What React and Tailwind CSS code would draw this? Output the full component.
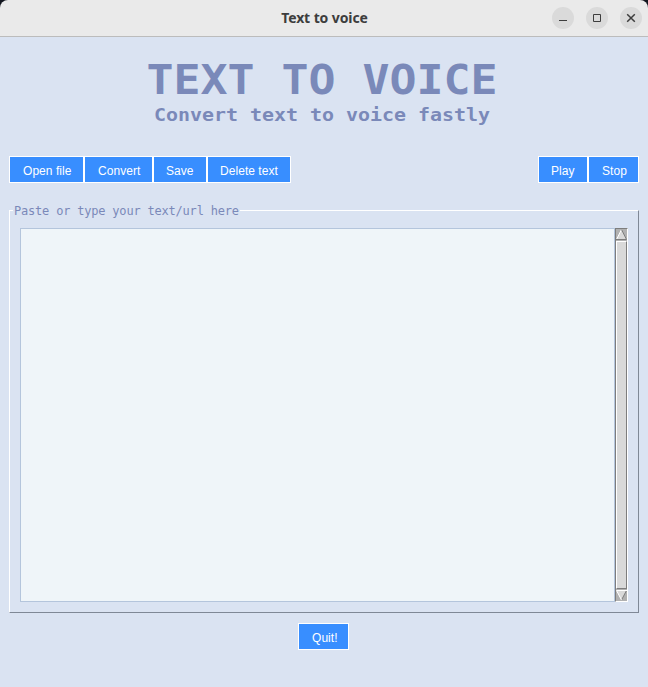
const mono = "font-['DejaVu_Sans_Mono',monospace] text-[#7a89b9]";

function Button({ className, children }) {
  return (
    <button
      className={`h-[27px] shrink-0 border border-white bg-[#388eff] pt-[3px] pl-[13px] text-left font-['Liberation_Sans',sans-serif] text-[12px] leading-[22px] tracking-[0.05px] whitespace-nowrap text-white ${className}`}
    >
      {children}
    </button>
  );
}

function WindowButton({ label, children }) {
  return (
    <button aria-label={label} className="size-[22px] rounded-full bg-[#dadada]">
      <svg viewBox="0 0 22 22" className="size-[22px]" fill="none" stroke="#3d3d3d">
        {children}
      </svg>
    </button>
  );
}

function TitleBar() {
  return (
    <div className="bg-[#12161f]">
      <header className="relative flex h-[37px] items-center justify-end gap-3 rounded-t-[8px] border-b border-[#bcbcbc] bg-[#eaeaea] pr-[6px]">
        <h1 className="absolute inset-x-0 top-0 pl-[1px] text-center font-['Noto_Sans',sans-serif] text-[14px] leading-[36px] font-bold tracking-[-0.1px] text-[#3d3d3d]">
          Text to voice
        </h1>
        <WindowButton label="Minimize">
          <path d="M7 13.5h8" />
        </WindowButton>
        <WindowButton label="Maximize">
          <path d="M7.5 7.5h7v7h-7z" />
        </WindowButton>
        <WindowButton label="Close">
          <path d="M7.2 7.2l7.6 7.6M14.8 7.2l-7.6 7.6" strokeWidth="1.5" />
        </WindowButton>
      </header>
    </div>
  );
}

function Scrollbar() {
  return (
    <div className="flex w-[13px] flex-col border border-t-[#7d7d7d] border-r-white border-b-white border-l-[#7d7d7d] bg-[#b1b1b1]">
      <svg viewBox="0 0 11 12" className="h-[12px] w-[11px]">
        <path d="M5.5 0.5L10.5 10.5H0.5z" fill="#d9d9d9" />
        <path d="M5.5 0.5L0.5 10.5" stroke="#fff" />
        <path d="M5.5 0.5L10.5 10.5H0" stroke="#7d7d7d" fill="none" />
      </svg>
      <div className="flex-1 border border-t-white border-r-[#7d7d7d] border-b-[#7d7d7d] border-l-white bg-[#d9d9d9]" />
      <svg viewBox="0 0 11 12" className="h-[12px] w-[11px]">
        <path d="M0.5 1.5H10.5L5.5 11z" fill="#d9d9d9" />
        <path d="M10.5 1.5L5.5 11" stroke="#7d7d7d" />
        <path d="M11 1.5H0.5L5.5 11" stroke="#fff" fill="none" />
      </svg>
    </div>
  );
}

export default function App() {
  return (
    <div className="flex h-[687px] w-[648px] flex-col overflow-hidden bg-[#dae3f2]">
      <TitleBar />
      <div className={`h-[89px] pt-[19px] pr-[4px] text-center font-bold whitespace-pre ${mono}`}>
        <h2 className="scale-x-[1.094] text-[41px] leading-[48px]">TEXT TO VOICE</h2>
        <p className="scale-x-[1.107] text-[18px] leading-[22px]">Convert text to voice fastly</p>
      </div>
      <div className="mt-[30px] flex pr-[9px] pl-[9px]">
        <Button className="w-[75px]">Open file</Button>
        <Button className="w-[69px]">Convert</Button>
        <Button className="w-[54px] !pl-[12px]">Save</Button>
        <Button className="w-[84px] !pl-[12px]">Delete text</Button>
        <Button className="ml-auto w-[50px] !pl-[12px]">Play</Button>
        <Button className="w-[51px]">Stop</Button>
      </div>
      <section className="mx-[9px] mt-[27px] h-[403px] border border-t-white border-r-[#7f8896] border-b-[#7f8896] border-l-white px-[10px]">
        <div className="flow-root h-[17px]">
          <div className={`-mt-[8px] -ml-[7px] w-[227px] bg-[#dae3f2] pl-[1px] text-[12px] leading-[16px] tracking-[-0.2px] whitespace-pre ${mono}`}>
            Paste or type your text/url here
          </div>
        </div>
        <div className="flex h-[374px]">
          <textarea
            aria-label="Text"
            className="min-w-0 flex-1 resize-none border border-[#b4c5dc] bg-[#eff5f9] outline-none"
          />
          <Scrollbar />
        </div>
      </section>
      <div className="mt-[10px] flex pl-[298px]">
        <Button className="w-[51px]">Quit!</Button>
      </div>
    </div>
  );
}
